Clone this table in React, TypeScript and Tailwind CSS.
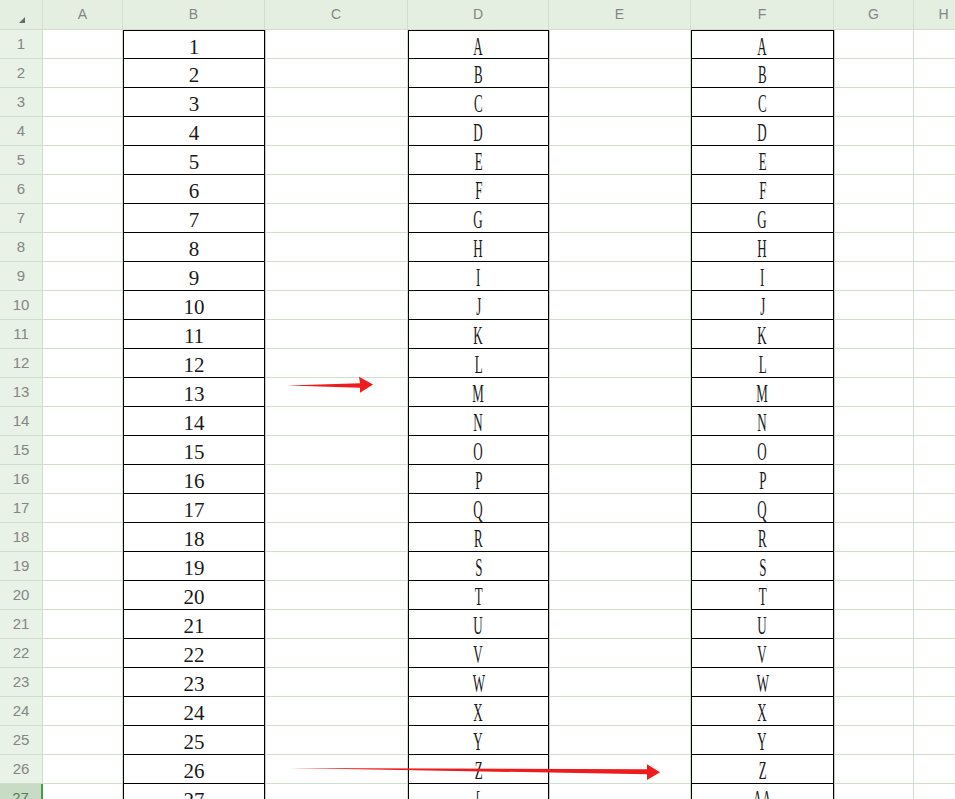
import React from 'react';

const colWidths = [80, 142, 143, 141, 142, 143, 80, 60];
const colNames = ['A', 'B', 'C', 'D', 'E', 'F', 'G', 'H'];

const toLetters = (n: number) => {
  // 1 -> A, 26 -> Z, 27 -> AA (column style)
  let s = '';
  while (n > 0) {
    const r = (n - 1) % 26;
    s = String.fromCharCode(65 + r) + s;
    n = Math.floor((n - 1) / 26);
  }
  return s;
};

const rows = Array.from({ length: 27 }, (_, i) => i + 1);

function Cell({ bordered, top, children }: { bordered?: boolean; top?: boolean; children?: React.ReactNode }) {
  if (bordered) {
    return (
      <div
        className={`h-[29px] border-x border-b border-black shadow-[1px_0_0_#c4c4c4] flex items-center justify-center text-[#1a1a1a] ${
          top ? 'border-t' : ''
        }`}
      >
        {children}
      </div>
    );
  }
  return <div className="h-[29px] border-r border-b border-[#cfdfcc]" />;
}

export default function App() {
  return (
    <div className="relative w-[955px] h-[799px] overflow-hidden bg-white" style={{ fontFamily: '"Liberation Sans", Arial, sans-serif' }}>
      <div className="flex">
        {/* Row header column */}
        <div className="w-[43px] shrink-0">
          <div className="h-[30px] bg-[#e4efe2] border-r border-b border-[#cfdfcc] relative">
            <div className="absolute left-[19px] top-[17px] w-0 h-0 border-l-[6px] border-l-transparent border-b-[6px] border-b-[#6a6a6a]" />
          </div>
          {rows.map((r) => (
            <div
              key={r}
              className={`h-[29px] flex items-center justify-center text-[15px] border-b ${
                r === 27
                  ? 'bg-[#c8dcc5] text-[#5c7a58] border-r-2 border-r-[#43a047] border-b-[#cfdfcc]'
                  : 'bg-[#e9f2e7] text-[#858585] border-r border-[#cfdfcc]'
              }`}
            >
              {r}
            </div>
          ))}
        </div>

        {colNames.map((name, ci) => (
          <div key={name} className="shrink-0" style={{ width: colWidths[ci] }}>
            <div className="h-[30px] bg-[#e4efe2] border-r border-b border-[#cfdfcc] flex items-center justify-center text-[14px] text-[#858585]">
              {name}
            </div>
            {rows.map((r) => {
              if (name === 'B') {
                return (
                  <Cell key={r} bordered top={r === 1}>
                    <span
                      className="text-[21px] leading-[24px] translate-y-[2px]"
                      style={{ fontFamily: '"Liberation Serif", serif' }}
                    >
                      {r}
                    </span>
                  </Cell>
                );
              }
              if (name === 'D' || name === 'F') {
                const txt = name === 'D' ? String.fromCharCode(64 + r) : toLetters(r);
                return (
                  <Cell key={r} bordered top={r === 1}>
                    <span
                      className="text-[25px] leading-[26px] inline-block scale-x-[0.52] translate-y-[2px]"
                      style={{ fontFamily: '"Liberation Serif", serif' }}
                    >
                      {txt}
                    </span>
                  </Cell>
                );
              }
              return <Cell key={r} />;
            })}
          </div>
        ))}
      </div>

      {/* annotation arrows drawn over the sheet */}
      <svg className="absolute inset-0 pointer-events-none" width="955" height="799">
        <polygon points="287,385.5 360,383.3 359,376.7 373,384.5 360,392.7 360,387.7" fill="#ee1c1c" />
        <polygon points="289,768 647,769.3 647,764.3 660,772.3 647,780 647,774.3" fill="#ee1c1c" />
      </svg>
    </div>
  );
}
